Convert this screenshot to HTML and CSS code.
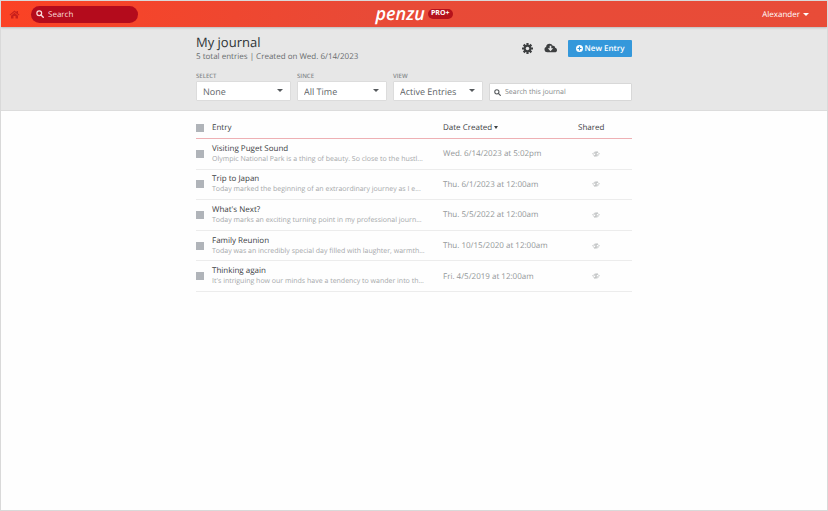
FILE: index.html
```html
<!DOCTYPE html>
<html lang="en">
<head>
<meta charset="utf-8">
<meta name="viewport" content="width=device-width, initial-scale=1">
<title>Penzu - My journal</title>
<link rel="stylesheet" href="styles.css">
</head>
<body>
<svg class="defs" aria-hidden="true">
  <symbol id="search" viewBox="0 0 16 16"><circle cx="6.5" cy="6.5" r="4.8" fill="none" stroke="currentColor" stroke-width="2.4"/><path d="M10 10l4.5 4.5" stroke="currentColor" stroke-width="2.8" stroke-linecap="round"/></symbol>
  <symbol id="eye" viewBox="0 0 18 14"><path d="M1 7q3.500-5 8-5t8 5q-3.500 5-8 5t-8-5z" fill="none" stroke="currentColor" stroke-width="1.300"/><path d="M6 7a3 3 0 0 1 3-3M12 7a3 3 0 0 1-3 3M12 1L6 13" fill="none" stroke="currentColor" stroke-width="1.500"/></symbol>
</svg>
<header class="topbar">
  <div class="topbar-left">
    <a class="home" href="#" aria-label="Home"><svg viewBox="0 0 22 18"><path d="M11 1L1 9.500l1.300 1.500L11 3.800l8.700 7.200L21 9.500 18 7V2h-3v2.400zM11 5.500L4 11.300V17h5v-5h4v5h5v-5.700z" fill="currentColor"/></svg></a>
    <label class="site-search"><svg><use href="#search"/></svg><input type="text" placeholder="Search" aria-label="Search"></label>
  </div>
  <a class="brand" href="#"><span class="wordmark">penzu</span><span class="plan">PRO+</span></a>
  <button class="account" type="button">Alexander<span class="caret"></span></button>
</header>
<section class="journal-bar">
  <div class="container">
    <div class="journal-head">
      <div>
        <h1>My journal</h1>
        <p>5 total entries | Created on Wed. 6/14/2023</p>
      </div>
      <div class="actions">
        <button class="icon-button" type="button" aria-label="Settings"><svg viewBox="0 0 20 20"><g stroke="currentColor" stroke-width="4"><path d="M10 0v20M0 10h20M3 3l14 14M17 3L3 17"/></g><circle cx="10" cy="10" r="7" fill="currentColor"/><circle cx="10" cy="10" r="3.200" fill="#e7e7e7"/></svg></button>
        <button class="icon-button cloud" type="button" aria-label="Download"><svg viewBox="0 0 24 18"><path d="M6 17a5.500 5.500 0 0 1-2-10.500C4 3 7 1 10 1c3 0 5 1.500 6 4 2.500-.5 4.500 1 4.500 3.500C22.500 9 24 10.800 24 13c0 2.500-2 4-4 4z" fill="currentColor"/><path d="M10.500 5h3v4.500H17L12 15 7 9.500h3.500z" fill="#e7e7e7"/></svg></button>
        <button class="new-entry" type="button"><svg viewBox="0 0 16 16"><circle cx="8" cy="8" r="8" fill="currentColor"/><path d="M8 3.500v9M3.500 8h9" stroke="#3498db" stroke-width="2.600"/></svg>New Entry</button>
      </div>
    </div>
    <form class="filters">
      <div class="filter"><label for="select">SELECT</label><div class="picker"><select id="select"><option>None</option><option>All</option></select><span class="caret"></span></div></div>
      <div class="filter"><label for="since">SINCE</label><div class="picker"><select id="since"><option>All Time</option></select><span class="caret"></span></div></div>
      <div class="filter"><label for="view">VIEW</label><div class="picker"><select id="view"><option>Active Entries</option></select><span class="caret"></span></div></div>
      <label class="journal-search"><svg><use href="#search"/></svg><input type="text" placeholder="Search this journal" aria-label="Search this journal"></label>
    </form>
  </div>
</section>
<main class="container">
  <table>
    <thead>
      <tr><th class="check"><input type="checkbox" aria-label="Select all entries"></th><th>Entry</th><th class="date">Date Created<span class="caret"></span></th><th class="shared">Shared</th></tr>
    </thead>
    <tbody>
      <tr><td class="check"><input type="checkbox" aria-label="Select Visiting Puget Sound"></td><td><a href="#">Visiting Puget Sound</a><p>Olympic National Park is a thing of beauty. So close to the hustl...</p></td><td class="date">Wed. 6/14/2023 at 5:02pm</td><td class="shared"><svg><use href="#eye"/></svg></td></tr>
      <tr><td class="check"><input type="checkbox" aria-label="Select Trip to Japan"></td><td><a href="#">Trip to Japan</a><p>Today marked the beginning of an extraordinary journey as I e...</p></td><td class="date">Thu. 6/1/2023 at 12:00am</td><td class="shared"><svg><use href="#eye"/></svg></td></tr>
      <tr><td class="check"><input type="checkbox" aria-label="Select What's Next?"></td><td><a href="#">What's Next?</a><p>Today marks an exciting turning point in my professional journ...</p></td><td class="date">Thu. 5/5/2022 at 12:00am</td><td class="shared"><svg><use href="#eye"/></svg></td></tr>
      <tr><td class="check"><input type="checkbox" aria-label="Select Family Reunion"></td><td><a href="#">Family Reunion</a><p>Today was an incredibly special day filled with laughter, warmth...</p></td><td class="date">Thu. 10/15/2020 at 12:00am</td><td class="shared"><svg><use href="#eye"/></svg></td></tr>
      <tr><td class="check"><input type="checkbox" aria-label="Select Thinking again"></td><td><a href="#">Thinking again</a><p>It's intriguing how our minds have a tendency to wander into th...</p></td><td class="date">Fri. 4/5/2019 at 12:00am</td><td class="shared"><svg><use href="#eye"/></svg></td></tr>
    </tbody>
  </table>
</main>
</body>
</html>
```
FILE: styles.css
```css
* { box-sizing: border-box; }

body {
  margin: 0;
  min-height: 100vh;
  border: 1px solid #d9d9d9;
  background: #fefefe;
  color: #3c4043;
  font: 8px/11px "Open Sans", "Noto Sans", sans-serif;
  text-rendering: geometricPrecision;
}

h1, p { margin: 0; }
a { color: inherit; text-decoration: none; }
button, input, select { font: inherit; color: inherit; text-rendering: inherit; }
button { border: 0; padding: 0; background: none; cursor: pointer; }
svg { display: block; flex: none; }
.defs { position: absolute; width: 0; height: 0; }

.caret {
  display: inline-block;
  border: 3px solid transparent;
  border-top-color: currentColor;
  border-bottom: 0;
}

.container {
  width: 436px;
  max-width: 100%;
  margin: 0 auto;
}

/* Top bar */
.topbar {
  display: grid;
  grid-template-columns: 1fr auto 1fr;
  align-items: center;
  height: 26px;
  padding: 0 8px;
  background: linear-gradient(90deg, #fb4224, #e84a37 45%, #e84c38);
  box-shadow: 0 1px 2px #bbb;
  position: relative;
  color: #fff;
}
.topbar-left { display: flex; align-items: center; gap: 11px; }
.home { color: #c9201b; }
.home svg { width: 11px; height: 9px; }
.site-search {
  display: flex;
  align-items: center;
  gap: 4px;
  width: 107px;
  height: 17px;
  padding: 0 5px;
  border-radius: 9px;
  background: #b40b1c;
  color: #fbdcdc;
}
.site-search svg { width: 8px; height: 8px; }
input[type="text"] {
  width: 100%;
  height: 12px;
  min-width: 0;
  padding: 0;
  border: 0;
  outline: 0;
  background: none;
}
::placeholder { color: inherit; opacity: 1; }
.brand { display: flex; align-items: center; gap: 3px; }
.wordmark { font: italic 600 18px/22px "Open Sans", sans-serif; }
.plan {
  padding: 0 3px;
  border-radius: 5px;
  background: #b5121b;
  font-size: 7px;
  line-height: 10px;
  font-weight: 700;
}
.account { display: flex; align-items: center; gap: 3px; justify-self: end; margin-right: 10px; }

/* Journal heading and filters */
.journal-bar {
  padding: 7px 0 9px;
  border-bottom: 1px solid #dcdcdc;
  background: #e7e7e7;
}
.journal-head { display: flex; justify-content: space-between; height: 37px; }
h1 { font-size: 13px; line-height: 17px; font-weight: 400; color: #2e3436; }
.journal-head p { color: #686c6e; }
.actions { display: flex; align-items: center; gap: 11px; height: 28px; color: #3d3f40; }
.icon-button svg { width: 11px; height: 11px; }
.cloud svg { width: 13px; height: 10px; }
.new-entry {
  display: flex;
  align-items: center;
  justify-content: center;
  gap: 2px;
  width: 64px;
  height: 17px;
  border-radius: 1px;
  background: #3498db;
  color: #fff;
  font-weight: 600;
}
.new-entry svg { width: 7px; height: 7px; }
.filters {
  display: grid;
  grid-template-columns: 95px 90px 90px 1fr;
  gap: 6px;
  align-items: end;
}
.filter > label { display: block; font-size: 6px; line-height: 10px; font-weight: 600; color: #85898b; }
.picker { position: relative; }
.picker .caret { position: absolute; top: 8px; right: 8px; pointer-events: none; }
select {
  display: block;
  appearance: none;
  width: 100%;
  height: 20px;
  padding: 0 6px;
  border: 1px solid #dcdcdc;
  border-radius: 1px;
  background: #fff;
  color: #606467;
  font-size: 9px;
}
.picker, .journal-search { color: #55595c; }
.journal-search {
  display: flex;
  align-items: center;
  gap: 4px;
  height: 18px;
  padding: 0 4px;
  border: 1px solid #d8d8d8;
  border-radius: 1px;
  background: #fff;
}
.journal-search svg { width: 7px; height: 7px; }
.journal-search input { color: #85898b; font-size: 7px; }

/* Entry list */
table {
  width: 100%;
  height: 181px;
  border-collapse: separate;
  border-spacing: 0;
  table-layout: fixed;
}
th, td { padding: 0; text-align: left; vertical-align: middle; }
th { height: 28px; padding-top: 6px; border-bottom: 1px solid #eeb0b4; font-weight: 500; }
td { border-bottom: 1px solid #ececec; }
td a { font-weight: 500; }
td p { color: #a5a8aa; font-size: 7px; white-space: nowrap; }
.check { width: 16px; }
.date { width: 135px; }
td.date { color: #929698; }
.date .caret { margin-left: 2px; border-width: 3px 2px 0; vertical-align: 1px; }
.shared { width: 54px; }
.shared svg { width: 8px; height: 6px; margin-left: 14px; color: #a0a3a5; }
input[type="checkbox"] {
  display: block;
  appearance: none;
  width: 8px;
  height: 8px;
  margin: 0;
  background: #b0b4b9;
}
```
